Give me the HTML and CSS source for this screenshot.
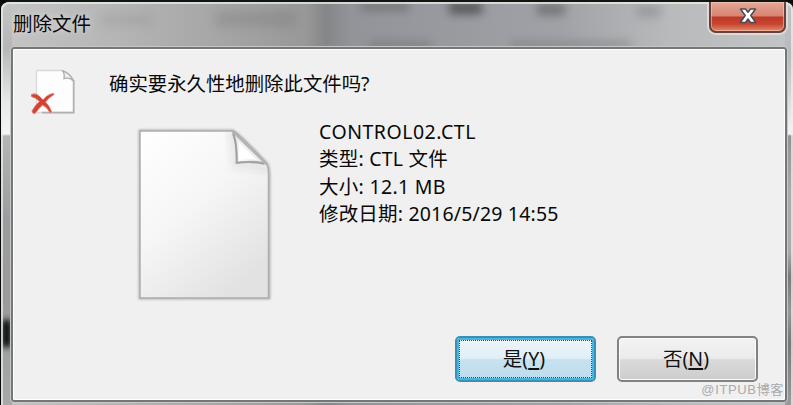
FILE: index.html
```html
<!DOCTYPE html>
<html lang="zh-CN">
<head>
<meta charset="utf-8">
<title>删除文件</title>
<link rel="stylesheet" href="styles.css">
</head>
<body>
<div class="window">
  <div class="glass" aria-hidden="true">
    <i class="smudge s1"></i><i class="smudge s2"></i><i class="smudge s3"></i><i class="smudge s4"></i><i class="smudge s5"></i><i class="smudge s6"></i><i class="smudge s7"></i><i class="smudge s8"></i><i class="smudge s9"></i>
  </div>
  <header class="titlebar">
    <h1 class="title">删除文件</h1>
    <button class="close" aria-label="关闭">
      <svg width="20" height="18" viewBox="0 0 20 18"><path d="M2.5 2H7.500L10 5.300L12.500 2H17.500L12.800 8.500L17.700 15.500H12.500L10 12L7.500 15.500H2.300L7.200 8.500Z" fill="#fff" stroke="#4b4b55" stroke-width="1.500" stroke-linejoin="round"/></svg>
    </button>
  </header>
  <main class="panel">
    <section class="content">
      <svg class="delete-icon" width="48" height="48" viewBox="0 0 48 48">
        <path d="M6.500 2.500H32L43.500 11.500V44.500H6.500Z" fill="#fdfdfd" stroke="#d8d8d8" stroke-width="1.300"/>
        <path d="M43.700 12V44.700H12" fill="none" stroke="#b0b0b0" stroke-width="1.700"/>
        <path d="M32 2.500Q35 5 34 10.500Q40 9 43.500 13Q40 5 32 2.500Z" fill="#eee" stroke="#b0b0b0" stroke-width="1.400"/>
        <path d="M1.500 26.500Q6 24.500 10 29L13 32Q17 26.500 23.500 25.500L24 26.500Q18.500 29.500 15.500 34Q19.500 38 21.500 43.500L20 44.500Q16.500 38.500 12.500 37Q8 41 5 45.500Q2.500 46 2 43Q5 37.500 9.500 33.500Q6 29.500 1.500 28.500Z" fill="#d44130" stroke="#dd7465" stroke-width="1"/>
      </svg>
      <div class="message">
        <p class="question">确实要永久性地删除此文件吗?</p>
        <div class="file">
          <svg class="file-icon" width="142" height="180" viewBox="0 0 142 180">
            <defs>
              <linearGradient id="paper" x1="0" y1="0" x2=".65" y2="1"><stop offset="0" stop-color="#fff"/><stop offset=".5" stop-color="#f6f6f6"/><stop offset="1" stop-color="#e2e2e2"/></linearGradient>
              <linearGradient id="fold" x1="0" y1="1" x2=".7" y2=".3"><stop offset="0" stop-color="#fff"/><stop offset="1" stop-color="#e3e3e3"/></linearGradient>
              <filter id="soft"><feGaussianBlur stdDeviation=".8"/></filter>
              <filter id="shade"><feGaussianBlur stdDeviation="4"/></filter>
              <clipPath id="sheet"><path d="M5 5H98L133 40V172H5Z"/></clipPath>
            </defs>
            <path d="M5 5H98Q104 8 132 38Q134 42 134 48V172H5Z" fill="none" stroke="#b4b4b4" stroke-width="3" filter="url(#soft)"/>
            <path d="M5 5H98Q104 8 131 37Q133.500 41 133.500 48V172H5Z" fill="url(#paper)" stroke="#adadad" stroke-width="1.500"/>
            <path d="M94 5Q102 18 101 38Q120 36 134 45" fill="none" stroke="#ccc" stroke-width="6" opacity=".6" filter="url(#shade)" clip-path="url(#sheet)"/>
            <path d="M97 5Q102 12 102 36.500Q123 34 131 38Z" fill="url(#fold)" stroke="#b4b4b4" stroke-width="1.800"/>
            <path d="M104 16V34Q114 32 122 34Z" fill="#fff"/>
            <path d="M98 8Q102 18 101.500 37Q117 35 129 38" fill="none" stroke="#a0a0a0" stroke-width="1.700"/>
          </svg>
          <div class="details">
            <div class="name">CONTROL02.CTL</div>
            <div class="type">类型: CTL 文件</div>
            <div class="size">大小: 12.1 MB</div>
            <div class="date">修改日期: 2016/5/29 14:55</div>
          </div>
        </div>
      </div>
    </section>
    <footer class="actions">
      <button class="btn primary"><span>是(<u>Y</u>)</span></button>
      <button class="btn"><span>否(<u>N</u>)</span></button>
    </footer>
    <span class="watermark">@ITPUB博客</span>
  </main>
</div>
</body>
</html>
```
FILE: styles.css
```css
* { box-sizing: border-box; }
body {
  margin: 0;
  background: #080808;
  overflow: hidden;
  font-family: "Noto Sans", "Noto Sans CJK SC", sans-serif;
  color: #080808;
}
.window {
  position: relative;
  height: 405px;
  margin-left: 1px;
  padding: 0 5px 3px 9px;
  border-top: 2px solid #101713;
  border-radius: 9px 9px 0 0;
  background: #aaa;
  overflow: hidden;
  display: flex;
  flex-direction: column;
}
.glass {
  position: absolute;
  inset: 0;
  overflow: hidden;
  background:
    linear-gradient(#c4c4c4 0, #b5b6b8 46px, #e9e9e9 100px, #f5f5f5 132px, #b5b5b5 134px, #9b9c9f 220px, #9b9b9b 300px, #a8a8a8 100%) left / 11px 100% no-repeat,
    linear-gradient(#c1c2c4 0, #b7babd 55px, #f2f2f2 128px, #f5f5f5 132px, #929292 134px, #aaa 190px, #aaa 250px, #797979 275px, #989898 310px, #777 340px, #9b9b9b 100%) right / 8px 100% no-repeat,
    linear-gradient(90deg, #c5c5c5 0, #b6b6b6 110px, #a4a4a4 230px, #989898 305px, #858687 325px, #93949a 350px, #999ba0 460px, #a0a2a7 560px, #b8babc 670px, #c2c4c6 100%);
}
.glass::after {
  content: "";
  position: absolute;
  inset: 0;
  border: 2px solid rgba(235,240,236,.75);
  border-bottom: 0;
  border-radius: 8px 8px 0 0;
}
.smudge { position: absolute; filter: blur(5px); opacity: .65; background: #666; }
.s1 { left: 100px; top: 12px; width: 50px; height: 12px; opacity: .13; }
.s2 { left: 215px; top: 9px; width: 80px; height: 16px; opacity: .22; }
.s3 { left: 360px; top: 0; width: 48px; height: 9px; }
.s4 { left: 448px; top: 0; width: 33px; height: 12px; background: #333; }
.s5 { left: 536px; top: 2px; width: 28px; height: 11px; background: #454545; opacity: .5; }
.s6 { left: 368px; top: 39px; width: 62px; height: 8px; opacity: .45; }
.s7 { left: 510px; top: 39px; width: 120px; height: 7px; opacity: .4; }
.s8 { left: 636px; top: 4px; width: 24px; height: 11px; opacity: .35; }
.s9 { left: 1px; top: 318px; width: 9px; height: 27px; background: #000; opacity: 1; filter: blur(3px); }
.titlebar {
  position: relative;
  height: 45px;
  flex: none;
  display: flex;
  justify-content: space-between;
  align-items: flex-start;
}
.title {
  margin: 8px 0 0 3px;
  font-size: 19.500px;
  line-height: 28px;
  font-weight: 400;
  text-shadow: 0 0 7px rgba(255,255,255,.6);
}
.close {
  width: 77px;
  height: 31px;
  margin-right: 2px;
  padding: 0 0 1px;
  border: 2px solid #68413e;
  border-top: 0;
  border-radius: 0 0 7px 7px;
  background: linear-gradient(#e2a99b 0, #d98270 14px, #bd3826 15px, #c94430 22px, #e18a6c 100%);
  box-shadow: 0 0 0 2px rgba(234,228,226,.75), inset 0 0 0 1px rgba(255,205,190,.55);
  display: flex;
  align-items: center;
  justify-content: center;
}
.panel {
  position: relative;
  flex: 1;
  min-height: 0;
  margin: 0 1px 0 1px;
  border: 2px solid #747777;
  border-radius: 3px;
  outline: 1px solid #c6c8c8;
  box-shadow: inset 0 0 0 1px #fff;
  background: #f0f0f0;
  display: flex;
  flex-direction: column;
}
.content {
  height: 287px;
  flex: none;
  display: flex;
  padding: 19px 0 0 17px;
}
.delete-icon { flex: none; }
.message { padding: 1px 0 0 31px; }
.question { margin: 0; font-size: 19.400px; line-height: 30px; white-space: nowrap; }
.file { display: flex; padding: 27px 0 0 26px; }
.file-icon { flex: none; }
.details { margin: -8px 0 0 42px; font-size: 19.500px; line-height: 27.300px; white-space: nowrap; }
.name { letter-spacing: .5px; }
.type { letter-spacing: .22px; }
.size { letter-spacing: .3px; }
.date { letter-spacing: .18px; }
.actions { display: flex; justify-content: flex-end; gap: 21px; padding-right: 27px; }
.btn {
  width: 141px;
  height: 46px;
  padding: 0 3px 0 0;
  border: 2px solid #828282;
  border-radius: 5px;
  background: linear-gradient(#f3f3f3 0, #ebebeb 48%, #dadada 52%, #cdcdcd 100%);
  box-shadow: inset 0 0 0 1px #fafafa;
  font: 19.500px/28px "Noto Sans", "Noto Sans CJK SC", sans-serif;
  color: #111;
  display: flex;
  align-items: center;
  justify-content: center;
}
.btn u { text-decoration-thickness: 1.500px; text-underline-offset: 2px; }
.primary {
  border-color: #3b8fb6;
  background: linear-gradient(#edf4f8 0, #e1eff7 48%, #c7e1ef 52%, #bcdced 100%);
  box-shadow: inset 0 0 0 2px #45b5df;
  position: relative;
}
.primary::after { content: ""; position: absolute; inset: 2px; border: 1px dotted #344b58; }
.watermark {
  position: absolute;
  right: 1px;
  bottom: 1px;
  font: 13px/18px "Liberation Sans", "Noto Sans CJK SC", sans-serif;
  letter-spacing: .65px;
  color: #aaa;
}
```
